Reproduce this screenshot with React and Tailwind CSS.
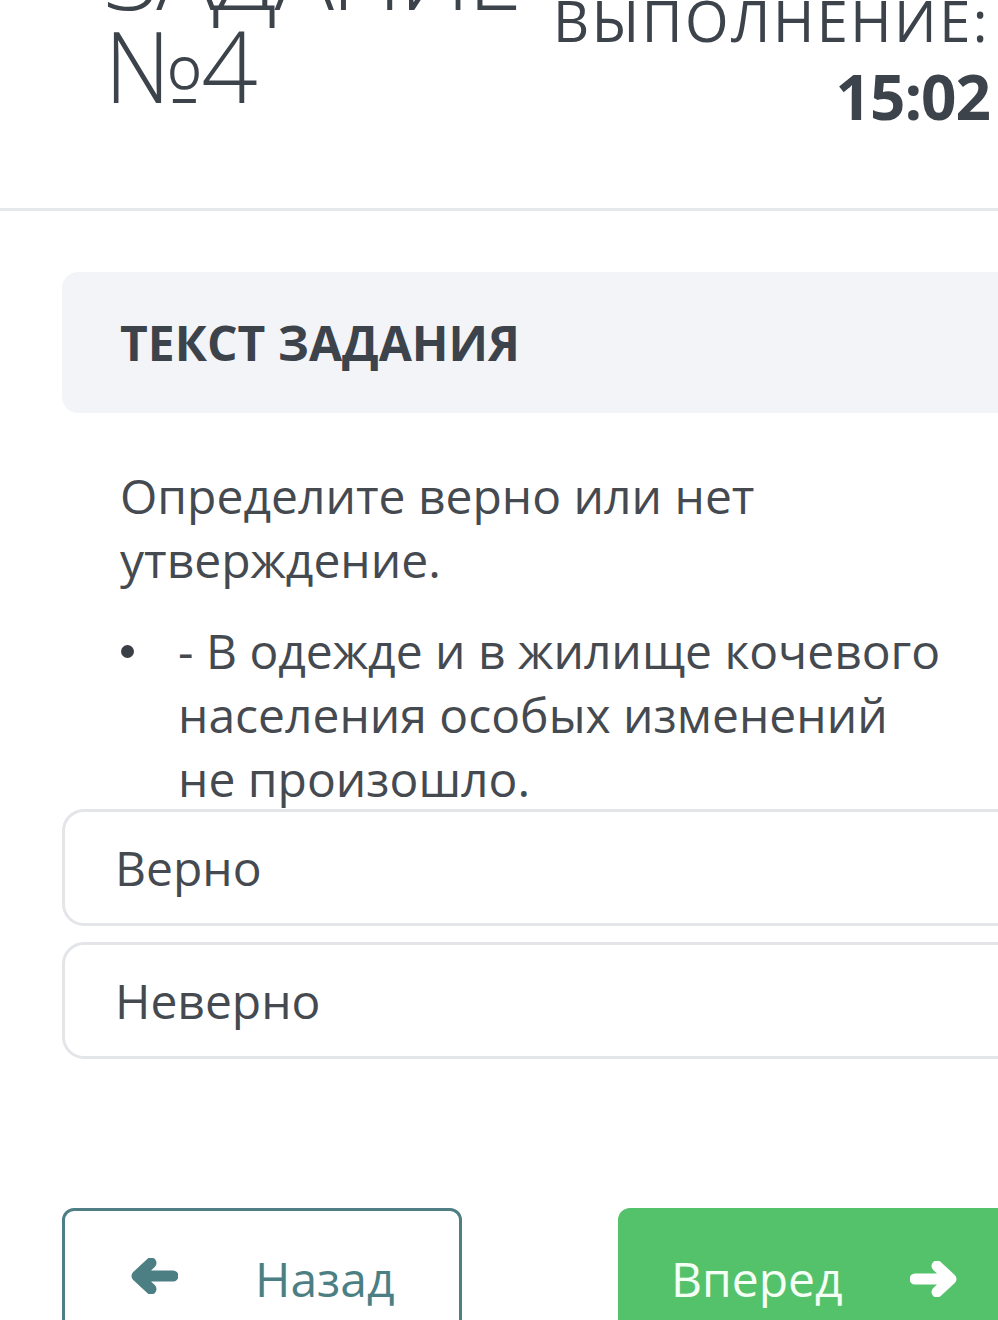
import React from 'react';

const options = ['Верно', 'Неверно'];

function Arrow({ dir = 'left', className }) {
  // толстая стрелка с круглыми концами, как в font awesome 5
  const d = dir === 'left' ? 'M43 18H8M21 5L7 18L21 31' : 'M5 18H40M27 5L41 18L27 31';
  return (
    <svg viewBox="0 0 48 36" className={className} fill="none" stroke="currentColor" strokeWidth="11" strokeLinecap="round" strokeLinejoin="round">
      <path d={d} />
    </svg>
  );
}

export default function App() {
  return (
    <div className="w-[998px] h-[1320px] overflow-hidden bg-white text-[#3d434b] font-['Open_Sans',sans-serif]">
      {/* шапка: номер задания и таймер */}
      <header className="flex justify-between border-b-[3px] border-[#e6e7e9] h-[211px]">
        <div className="pl-[104px] -mt-[75px] text-[99px] font-light leading-[93px] tracking-[-3px] whitespace-nowrap">
          ЗАДАНИЕ
          <br />
          №4
        </div>
        <div className="-mt-[70px] pr-[8px] text-right whitespace-nowrap">
          <div className="text-[56px] font-normal leading-[60px] tracking-[2.5px]">
            ВРЕМЯ НА
            <br />
            ВЫПОЛНЕНИЕ:
          </div>
          <div className="mt-[11px] text-[62px] font-bold leading-[70px] tracking-[-1px]">15:02</div>
        </div>
      </header>

      <main className="pl-[62px] -mr-[60px]">
        <div className="mt-[61px] h-[141px] rounded-[16px] bg-[#f2f4f7] pl-[58px] flex items-center">
          <h2 className="text-[48px] font-bold">ТЕКСТ ЗАДАНИЯ</h2>
        </div>

        <div className="pl-[58px] pt-[51px] text-[48px] leading-[64px] text-[#454a51]">
          <p>
            Определите верно или нет
            <br />
            утверждение.
          </p>
          <div className="mt-[27px] flex">
            <span className="w-[58px] shrink-0 pt-[26px] pl-[1px]">
              <span className="block w-[13px] h-[13px] rounded-full bg-[#3a3f45]" />
            </span>
            <p>
              - В одежде и в жилище кочевого
              <br />
              населения особых изменений
              <br />
              не произошло.
            </p>
          </div>
        </div>

        <div className="-mt-[2px] flex flex-col gap-[16px]">
          {options.map((opt) => (
            <div
              key={opt}
              className="h-[117px] rounded-[22px] border-[3px] border-[#e3e5e8] pl-[50px] flex items-center text-[48px] text-[#454a51]"
            >
              {opt}
            </div>
          ))}
        </div>

        <div className="mt-[149px] flex gap-[156px]">
          <button className="w-[400px] h-[150px] rounded-[12px] border-[3px] border-[#4f7f84] text-[#4b7f84] flex items-start pt-[36px] pl-[65px] text-[48px] leading-[64px]">
            <Arrow dir="left" className="w-[48px] h-[36px] mt-[11px]" />
            <span className="ml-[77px]">Назад</span>
          </button>
          <button className="w-[440px] h-[150px] rounded-[12px] bg-[#54c26b] text-[#f4fff5] flex items-start pt-[39px] pl-[53px] text-[48px] leading-[64px]">
            <span>Вперед</span>
            <Arrow dir="right" className="w-[48px] h-[36px] mt-[14px] ml-[67px] text-white" />
          </button>
        </div>
      </main>
    </div>
  );
}
